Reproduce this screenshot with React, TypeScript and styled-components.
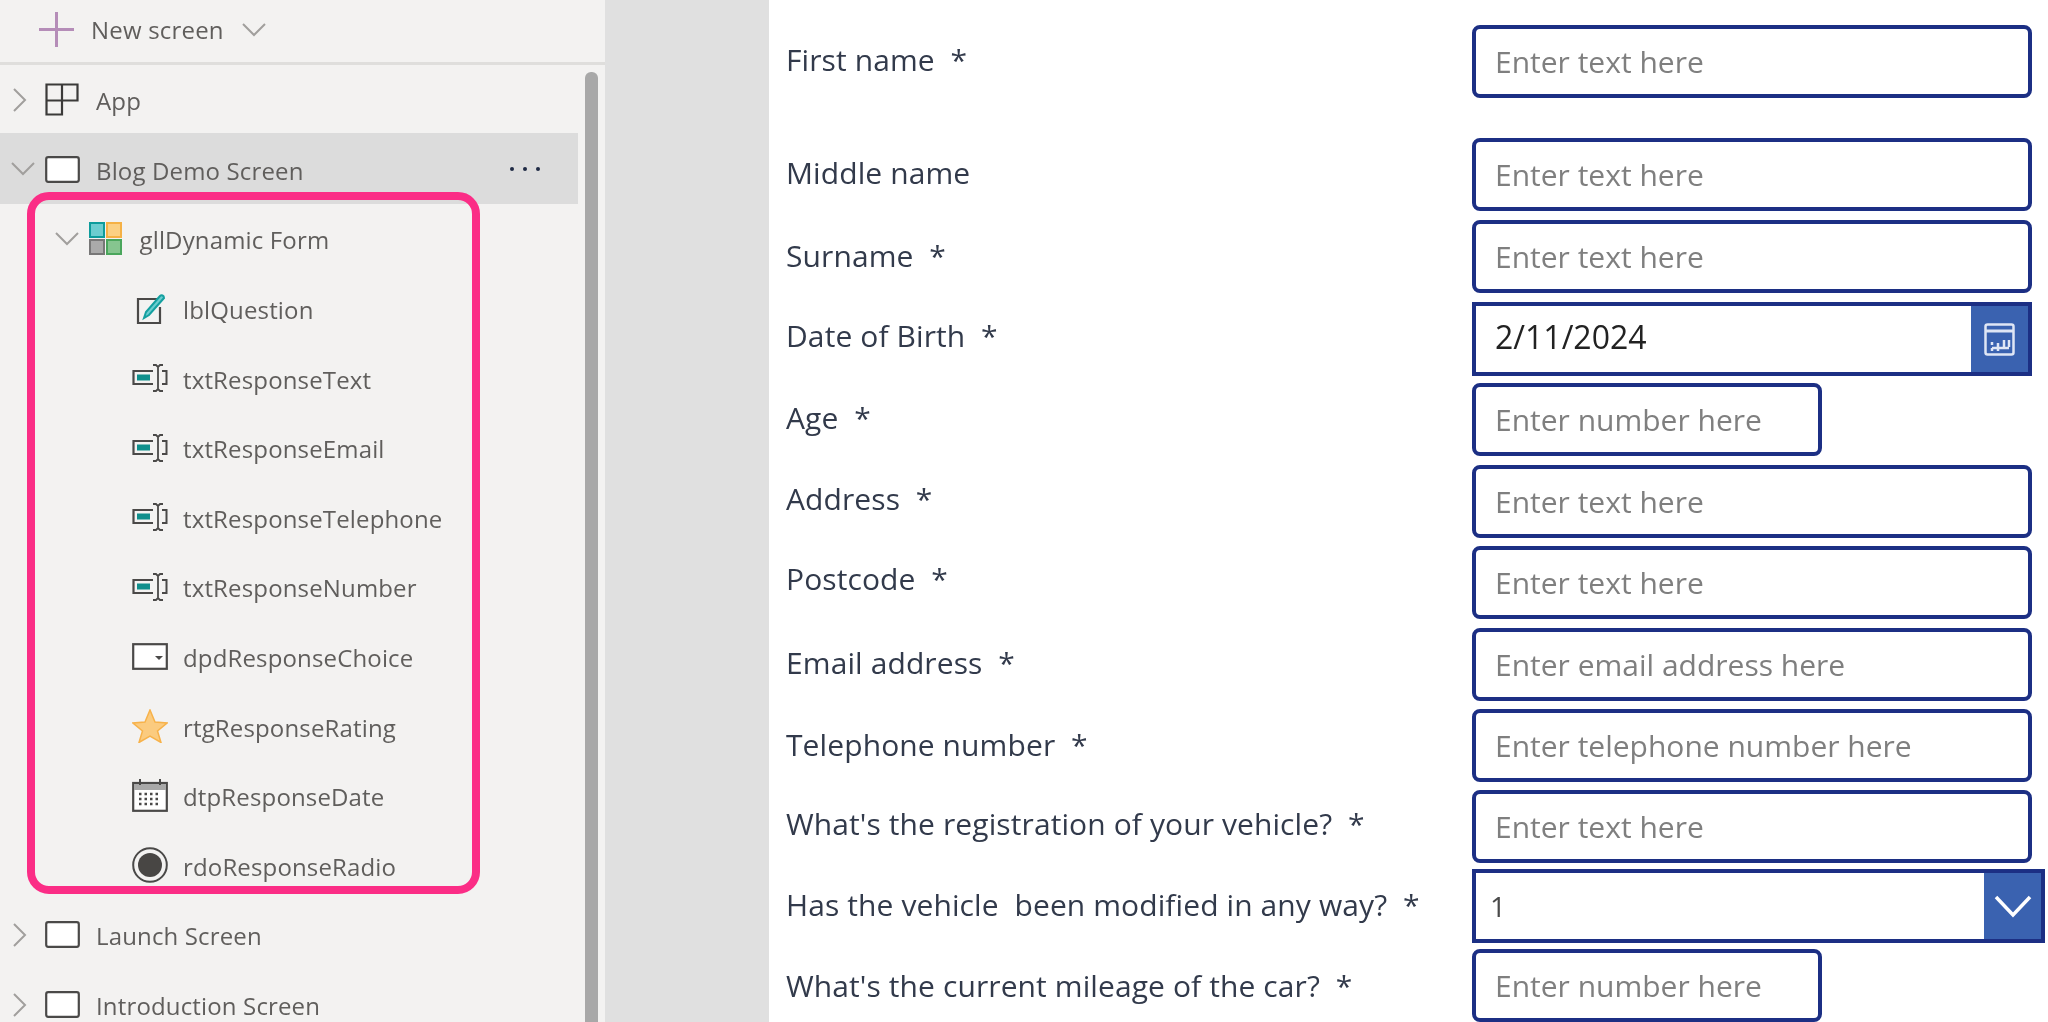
import React from 'react';
import styled, { createGlobalStyle } from 'styled-components';

const GlobalStyle = createGlobalStyle`
    html, body {
        margin: 0;
        padding: 0;
        height: 100%;
        overflow: hidden;
        background: #fff;
    }
`;

const Page = styled.div`
    display: flex;
    width: 2048px;
    height: 1022px;
    overflow: hidden;
    filter: blur(0.4px);
`;

// left tree panel
const Sidebar = styled.aside`
    position: relative;
    flex: 0 0 605px;
    background: #f3f2f1;
    font-family: 'Open Sans', sans-serif;
    color: #605e5c;
    overflow: hidden;
`;

const NewScreenBar = styled.div`
    display: flex;
    align-items: center;
    box-sizing: border-box;
    height: 65px;
    padding: 0 0 3px 39px;
    border-bottom: 3px solid #dfdedc;
    font-size: 24px;
    letter-spacing: 0.2px;
`;

const NewScreenLabel = styled.span`
    margin: 0 18px 0 17px;
`;

const Tree = styled.div`
    width: 578px;
`;

const TreeRow = styled.div<{ $depth: number; $selected?: boolean }>`
    display: flex;
    align-items: center;
    box-sizing: border-box;
    height: ${p => (p.$selected ? 71.6 : 69.6)}px;
    margin-top: ${p => (p.$selected ? -2 : 0)}px;
    padding-top: ${p => (p.$selected ? 2 : 0)}px;
    padding-left: ${p => 11 + p.$depth * 43.5}px;
    background: ${p => (p.$selected ? '#dcdcdc' : 'transparent')};
`;

const ChevronSlot = styled.span`
    display: flex;
    flex: 0 0 34px;
    align-items: center;
`;

const IconSlot = styled.span`
    display: flex;
    flex: 0 0 36px;
    justify-content: flex-start;
    align-items: center;
    margin-right: 15px;
`;

const TreeLabel = styled.span`
    padding-top: 2px;
    font-size: 24px;
    letter-spacing: 0.15px;
    white-space: nowrap;
`;

const MoreDots = styled.span`
    display: flex;
    gap: 9px;
    margin-left: auto;
    margin-right: 38px;
    & > i {
        width: 4px;
        height: 4px;
        background: #1f2a44;
        border-radius: 50%;
    }
`;

const Scrollbar = styled.div`
    position: absolute;
    left: 585px;
    top: 72px;
    bottom: 0;
    width: 13px;
    background: #a8a8a8;
    border-radius: 6px 6px 0 0;
`;

// pink callout drawn over the tree
const Highlight = styled.div`
    position: absolute;
    left: 27px;
    top: 192px;
    width: 453px;
    height: 702px;
    box-sizing: border-box;
    border: 8px solid #fb2d86;
    border-radius: 22px;
`;

const Gutter = styled.div`
    flex: 0 0 164px;
    background: #e0e0e0;
`;

const Form = styled.main`
    flex: 1;
    background: #fff;
    padding: 25px 0 0 17px;
    font-family: 'Open Sans', sans-serif;
`;

const FormRow = styled.div<{ $pitch: number }>`
    display: flex;
    align-items: flex-start;
    height: ${p => p.$pitch}px;
`;

const Question = styled.label<{ $lift: number }>`
    display: flex;
    align-items: center;
    box-sizing: border-box;
    flex: 0 0 686px;
    height: 71px;
    padding-bottom: ${p => Math.max(p.$lift, 0) * 2}px;
    padding-top: ${p => Math.max(-p.$lift, 0) * 2}px;
    font-size: 30px;
    letter-spacing: 0.1px;
    color: #323a4b;
    white-space: pre;
`;

const TextInput = styled.input<{ $short?: boolean }>`
    box-sizing: border-box;
    width: ${p => (p.$short ? 350 : 560)}px;
    height: 73px;
    padding: 0 19px;
    background: #fff;
    border: 4px solid #1c2f84;
    border-radius: 8px;
    outline: none;
    font-family: 'Open Sans', sans-serif;
    font-size: 30px;
    color: #222;
    &::placeholder {
        color: #7f7f7f;
        opacity: 1;
    }
`;

const PickerBox = styled.div<{ $wide?: boolean }>`
    display: flex;
    align-items: center;
    box-sizing: border-box;
    width: ${p => (p.$wide ? 573 : 560)}px;
    height: 74px;
    border: 4px solid #1c2f84;
    background: #fff;
`;

const PickerValue = styled.span<{ $dim?: boolean }>`
    flex: 1;
    padding-left: ${p => (p.$dim ? 14 : 19)}px;
    padding-bottom: ${p => (p.$dim ? 0 : 6)}px;
    font-size: ${p => (p.$dim ? 28 : 32)}px;
    color: ${p => (p.$dim ? '#4a4a4a' : '#222')};
`;

const PickerButton = styled.span`
    display: flex;
    flex: 0 0 57px;
    align-self: stretch;
    align-items: center;
    justify-content: center;
    background: #3a62b0;
`;

const Svg = styled.svg`
    display: block;
`;

const ChevronRight = styled(Svg)`
    margin-left: 2px;
`;

const Chevron = ({ open }: { open?: boolean }) =>
    open ? (
        <Svg width={24} height={14} viewBox="0 0 24 14">
            <path d="M1 1l11 11L23 1" fill="none" stroke="#a19f9d" strokeWidth="2" />
        </Svg>
    ) : (
        <ChevronRight width={14} height={24} viewBox="0 0 14 24">
            <path d="M1 1l11 11L1 23" fill="none" stroke="#a19f9d" strokeWidth="2" />
        </ChevronRight>
    );

const PlusIcon = () => (
    <Svg width={35} height={35} viewBox="0 0 35 35">
        <path d="M17.5 0v35M0 17.5h35" stroke="#b58db8" strokeWidth="3" />
    </Svg>
);

const AppIcon = () => (
    <Svg width={34} height={33} viewBox="0 0 34 33">
        <path d="M1.5 1.5h31v16h-31zM17 1.5v16M1.5 17.5v14h15.500v-14" fill="none" stroke="#3b3a39" strokeWidth="2.2" />
    </Svg>
);

const ScreenIcon = () => (
    <Svg width={35} height={27} viewBox="0 0 35 27">
        <rect x="1.2" y="1.2" width="32.6" height="24.6" rx="2" fill="#fff" stroke="#4a4948" strokeWidth="2.2" />
    </Svg>
);

const GalleryIcon = () => (
    <Svg width={33} height={33} viewBox="0 0 33 33">
        <rect x="1" y="1" width="14" height="14" fill="#6ccdd0" stroke="#0d9c9c" strokeWidth="2" />
        <rect x="18" y="1" width="14" height="14" fill="#fbd083" stroke="#f5b145" strokeWidth="2" />
        <rect x="1" y="18" width="14" height="14" fill="#aaa" stroke="#777" strokeWidth="2" />
        <rect x="18" y="18" width="14" height="14" fill="#86c58f" stroke="#4aa65c" strokeWidth="2" />
    </Svg>
);

const LabelIcon = () => (
    <Svg width={36} height={32} viewBox="-4 0 36 32">
        <path d="M22 6H2v24h22V14" fill="none" stroke="#4a4948" strokeWidth="2.2" />
        <path d="M8 25l2-6L24 3c1.500-1.500 4-0.500 4 2L13 22z" fill="#6ccdd0" stroke="#14a0a0" strokeWidth="2" />
    </Svg>
);

const TextInputIcon = () => (
    <Svg width={36} height={28} viewBox="0 0 36 28">
        <path d="M21 7H1.500v13H21" fill="none" stroke="#4a4948" strokeWidth="2.2" />
        <rect x="5" y="10.500" width="13" height="6" fill="#0f8f8c" />
        <path d="M30 7h4.500v13H30" fill="none" stroke="#4a4948" strokeWidth="2" />
        <path d="M21 1h3l2 2 2-2h3M26 3v22M21 27h3l2-2 2 2h3" fill="none" stroke="#4a4948" strokeWidth="1.800" />
    </Svg>
);

const DropdownIcon = () => (
    <Svg width={36} height={27} viewBox="0 0 36 27">
        <rect x="1.200" y="1.200" width="33.600" height="24.600" fill="#fff" stroke="#4a4948" strokeWidth="2.200" />
        <path d="M23 13h8l-4 4z" fill="#4a4948" />
    </Svg>
);

const StarIcon = () => (
    <Svg width={36} height={34} viewBox="0 0 36 34">
        <path d="M18 1l5 12 12 1-9.500 8 3.500 11.500L18 27 7 33.500 10.500 22 1 14l12-1z" fill="#fbcb7f" stroke="#f7b24a" strokeWidth="1.500" />
    </Svg>
);

const CalendarIcon = () => (
    <Svg width={36} height={33} viewBox="0 0 36 33">
        <rect x="1.200" y="4" width="33.600" height="27.800" fill="#fff" stroke="#4a4948" strokeWidth="2.200" />
        <rect x="2" y="5" width="32" height="6" fill="#a8a8a8" />
        <path d="M8 0v6M28 0v6" stroke="#4a4948" strokeWidth="2" />
        <path d="M7 15h22M7 20h22M7 25h22" stroke="#4a4948" strokeWidth="2.500" strokeDasharray="2.500 3" />
    </Svg>
);

const RadioIcon = () => (
    <Svg width={36} height={36} viewBox="0 0 36 36">
        <circle cx="18" cy="18" r="16.800" fill="none" stroke="#4a4948" strokeWidth="2" />
        <circle cx="18" cy="18" r="12" fill="#484644" />
    </Svg>
);

const DateGlyph = () => (
    <Svg width={31} height={33} viewBox="0 0 31 33">
        <rect x="1.500" y="1.500" width="28" height="30" rx="2" fill="none" stroke="#dfe6f5" strokeWidth="2.500" />
        <path d="M2 8h27" stroke="#dfe6f5" strokeWidth="3" />
        <path d="M8 28v-3M8 22v-3M14 28v-8M20 24v-7M25 24v-7M8 25h17" stroke="#dfe6f5" strokeWidth="2.500" fill="none" />
    </Svg>
);

const DownGlyph = () => (
    <Svg width={38} height={24} viewBox="0 0 38 24">
        <path d="M2 3l17 18L36 3" fill="none" stroke="#fff" strokeWidth="3.500" />
    </Svg>
);

const children: { name: string; icon: React.ReactNode }[] = [
    { name: 'lblQuestion', icon: <LabelIcon /> },
    { name: 'txtResponseText', icon: <TextInputIcon /> },
    { name: 'txtResponseEmail', icon: <TextInputIcon /> },
    { name: 'txtResponseTelephone', icon: <TextInputIcon /> },
    { name: 'txtResponseNumber', icon: <TextInputIcon /> },
    { name: 'dpdResponseChoice', icon: <DropdownIcon /> },
    { name: 'rtgResponseRating', icon: <StarIcon /> },
    { name: 'dtpResponseDate', icon: <CalendarIcon /> },
    { name: 'rdoResponseRadio', icon: <RadioIcon /> },
];

type Field = { label: string; pitch: number; lift: number } & (
    | { kind: 'text'; placeholder: string; short?: boolean }
    | { kind: 'date' | 'select'; value: string }
);

const fields: Field[] = [
    { label: 'First name  *', pitch: 113, lift: 1, kind: 'text', placeholder: 'Enter text here' },
    { label: 'Middle name', pitch: 82, lift: 1, kind: 'text', placeholder: 'Enter text here' },
    { label: 'Surname  *', pitch: 82, lift: 0, kind: 'text', placeholder: 'Enter text here' },
    { label: 'Date of Birth  *', pitch: 81, lift: 2, kind: 'date', value: '2/11/2024' },
    { label: 'Age  *', pitch: 82, lift: 1, kind: 'text', placeholder: 'Enter number here', short: true },
    { label: 'Address  *', pitch: 81, lift: 2, kind: 'text', placeholder: 'Enter text here' },
    { label: 'Postcode  *', pitch: 82, lift: 3, kind: 'text', placeholder: 'Enter text here' },
    { label: 'Email address  *', pitch: 81, lift: 1, kind: 'text', placeholder: 'Enter email address here' },
    { label: 'Telephone number  *', pitch: 81, lift: 0, kind: 'text', placeholder: 'Enter telephone number here' },
    { label: "What's the registration of your vehicle?  *", pitch: 79, lift: 2, kind: 'text', placeholder: 'Enter text here' },
    { label: 'Has the vehicle  been modified in any way?  *', pitch: 80, lift: 0, kind: 'select', value: '1' },
    { label: "What's the current mileage of the car?  *", pitch: 80, lift: -1, kind: 'text', placeholder: 'Enter number here', short: true },
];

const App: React.FC = () => {
    return (
        <Page>
            <GlobalStyle />
            <Sidebar>
                <NewScreenBar>
                    <PlusIcon />
                    <NewScreenLabel>New screen</NewScreenLabel>
                    <Chevron open />
                </NewScreenBar>
                <Tree>
                    <TreeRow $depth={0}>
                        <ChevronSlot><Chevron /></ChevronSlot>
                        <IconSlot><AppIcon /></IconSlot>
                        <TreeLabel>App</TreeLabel>
                    </TreeRow>
                    <TreeRow $depth={0} $selected>
                        <ChevronSlot><Chevron open /></ChevronSlot>
                        <IconSlot><ScreenIcon /></IconSlot>
                        <TreeLabel>Blog Demo Screen</TreeLabel>
                        <MoreDots><i /><i /><i /></MoreDots>
                    </TreeRow>
                    <TreeRow $depth={1}>
                        <ChevronSlot><Chevron open /></ChevronSlot>
                        <IconSlot><GalleryIcon /></IconSlot>
                        <TreeLabel>gllDynamic Form</TreeLabel>
                    </TreeRow>
                    {children.map(c => (
                        <TreeRow $depth={2} key={c.name}>
                            <ChevronSlot />
                            <IconSlot>{c.icon}</IconSlot>
                            <TreeLabel>{c.name}</TreeLabel>
                        </TreeRow>
                    ))}
                    <TreeRow $depth={0}>
                        <ChevronSlot><Chevron /></ChevronSlot>
                        <IconSlot><ScreenIcon /></IconSlot>
                        <TreeLabel>Launch Screen</TreeLabel>
                    </TreeRow>
                    <TreeRow $depth={0}>
                        <ChevronSlot><Chevron /></ChevronSlot>
                        <IconSlot><ScreenIcon /></IconSlot>
                        <TreeLabel>Introduction Screen</TreeLabel>
                    </TreeRow>
                </Tree>
                <Scrollbar />
                <Highlight />
            </Sidebar>
            <Gutter />
            <Form>
                {fields.map(f => (
                    <FormRow $pitch={f.pitch} key={f.label}>
                        <Question $lift={f.lift}>{f.label}</Question>
                        {f.kind === 'text' && <TextInput placeholder={f.placeholder} $short={f.short} />}
                        {f.kind === 'date' && (
                            <PickerBox>
                                <PickerValue>{f.value}</PickerValue>
                                <PickerButton><DateGlyph /></PickerButton>
                            </PickerBox>
                        )}
                        {f.kind === 'select' && (
                            <PickerBox $wide>
                                <PickerValue $dim>{f.value}</PickerValue>
                                <PickerButton><DownGlyph /></PickerButton>
                            </PickerBox>
                        )}
                    </FormRow>
                ))}
            </Form>
        </Page>
    );
};

export default App;
